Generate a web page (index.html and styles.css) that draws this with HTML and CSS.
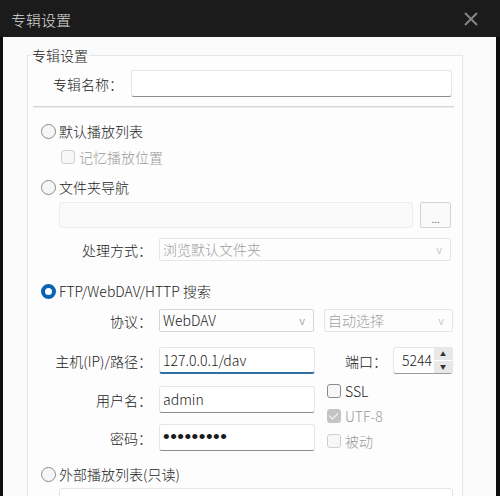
FILE: index.html
```html
<!DOCTYPE html>
<html lang="zh-CN">
  <head>
    <meta charset="UTF-8" />
    <meta name="viewport" content="width=device-width, initial-scale=1.0" />
    <title>专辑设置</title>
    <link rel="stylesheet" href="styles.css">
  </head>
  <body>
    <div class="window">
      <!-- Title bar -->
      <div class="titlebar">
        <span class="title">专辑设置</span>
        <svg class="close" width="16" height="16" viewBox="0 0 16 16">
          <path d="M2 2 L14 14 M14 2 L2 14" stroke="#858585" stroke-width="2" fill="none" />
        </svg>
      </div>

      <div class="content">
        <fieldset class="group">
          <legend>专辑设置</legend>

          <div class="row row-name">
            <label class="label label-short">专辑名称：</label>
            <div class="field field-name"></div>
          </div>
          <div class="sep"></div>

          <!-- Default playlist -->
          <div class="option opt-default"><span class="radio"></span>默认播放列表</div>
          <div class="option opt-sub disabled"><span class="check"></span>记忆播放位置</div>

          <!-- Folder navigation -->
          <div class="option opt-folder"><span class="radio"></span>文件夹导航</div>
          <div class="row row-path">
            <div class="field field-path disabled"></div>
            <div class="btn-more">...</div>
          </div>
          <div class="row row-mode">
            <label class="label">处理方式：</label>
            <div class="select select-mode disabled">浏览默认文件夹<span class="chev">v</span></div>
          </div>

          <!-- FTP / WebDAV / HTTP -->
          <div class="option opt-ftp"><span class="radio on"></span>FTP/WebDAV/HTTP 搜索</div>
          <div class="row row-proto">
            <label class="label">协议：</label>
            <div class="select select-proto">WebDAV<span class="chev">v</span></div>
            <div class="select select-auto disabled">自动选择<span class="chev">v</span></div>
          </div>
          <div class="row row-host">
            <label class="label">主机(IP)/路径：</label>
            <div class="field field-host focused">127.0.0.1/dav</div>
            <label class="port-label">端口：</label>
            <div class="spin">
              <span class="spin-value">5244</span>
              <span class="spin-btns">
                <span class="spin-btn">▲</span>
                <span class="spin-btn">▼</span>
              </span>
            </div>
          </div>

          <div class="cred">
            <div class="cred-fields">
              <div class="row row-user">
                <label class="label">用户名：</label>
                <div class="field field-host">admin</div>
              </div>
              <div class="row row-pass">
                <label class="label">密码：</label>
                <div class="field field-host dots">•••••••••</div>
              </div>
            </div>
            <div class="cred-flags">
              <div class="option"><span class="check"></span>SSL</div>
              <div class="option disabled"><span class="check checked"></span>UTF-8</div>
              <div class="option disabled"><span class="check"></span>被动</div>
            </div>
          </div>

          <!-- External playlist -->
          <div class="option opt-external"><span class="radio"></span>外部播放列表(只读)</div>
          <div class="row row-external">
            <div class="field field-external"></div>
          </div>
        </fieldset>
      </div>
    </div>
  </body>
</html>
```

FILE: styles.css
```css
html,
body {
  margin: 0;
  height: 496px;
  overflow: hidden;
}
body {
  background-color: #0e0e0e;
  font-family: "Noto Sans CJK SC", "Noto Sans", sans-serif;
  font-size: 14px;
  font-weight: 300;
  color: #1b1b1b;
}
.window {
  height: 496px;
  display: flex;
  flex-direction: column;
}
.titlebar {
  height: 37px;
  flex: none;
  display: flex;
  align-items: center;
  justify-content: space-between;
  padding: 0 21px 0 11px;
  background-color: #1b1b1b;
}
.title {
  color: #dadada;
  font-size: 15px;
  line-height: 18px;
  margin-top: 2px;
}
.close {
  margin-top: 1px;
}
.content {
  flex: 1;
  margin: 0 4px 0 3px;
  background-color: #fbfbfb;
  overflow: hidden;
}
.group {
  margin: 9px 34px 0 24px;
  padding: 0 9px 20px 13px;
  border: 1px solid #e6e6e6;
  background-color: #fdfdfd;
}
.group legend {
  padding: 0 1px;
  margin-left: -10px;
  line-height: 18px;
}
.row {
  display: flex;
  align-items: center;
}
.label {
  width: 111px;
  margin-right: 7px;
  text-align: right;
  flex: none;
}
.label-short {
  width: 82px;
  margin-right: 8px;
}
.field {
  box-sizing: border-box;
  height: 27px;
  padding: 0 3px;
  line-height: 25px;
  background-color: #fff;
  border: 1px solid #e6e6e6;
  border-bottom-color: #8e8e8e;
  border-radius: 3px;
  font-size: 14px;
  color: #1b1b1b;
}
.field.disabled {
  background-color: #fafafa;
  border-color: #ececec;
}
.field.focused {
  border-bottom: 2px solid #2f6fa3;
}
.select {
  box-sizing: border-box;
  height: 23px;
  padding: 0 3px;
  line-height: 21px;
  display: flex;
  justify-content: space-between;
  border: 1px solid #d5d5d5;
  border-radius: 2px;
  background-color: #fdfdfd;
}
.select.disabled {
  border-color: #e6e6e6;
  color: #a0a0a0;
}
.chev {
  font-size: 11px;
  color: #777;
  margin-right: 5px;
}
.disabled .chev {
  color: #aaa;
}

/* rows, top to bottom */
.row-name {
  margin-top: 6px;
}
.field-name {
  flex: 1;
  margin-right: 1px;
}
.sep {
  margin: 9px -1px 0 -8px;
  border-top: 1px solid #d6d6d6;
  border-bottom: 1px solid #eeeeee;
}
.option {
  display: flex;
  align-items: center;
  height: 22px;
  line-height: 22px;
}
.option.disabled {
  color: #9a9a9a;
}
.opt-default {
  margin-top: 12px;
}
.opt-sub {
  margin-top: 4px;
  padding-left: 20px;
}
.opt-folder {
  margin-top: 8px;
}
.row-path {
  margin-top: 4px;
  padding-left: 18px;
}
.field-path {
  width: 354px;
  height: 26px;
}
.btn-more {
  box-sizing: border-box;
  width: 31px;
  height: 26px;
  margin-left: 7px;
  border: 1px solid #d4d4d4;
  border-radius: 2px;
  background-color: #fafafa;
  color: #555;
  font-size: 11px;
  line-height: 30px;
  text-align: center;
}
.row-mode {
  margin-top: 10px;
}
.select-mode {
  width: 292px;
}
.opt-ftp {
  margin-top: 19px;
}
.row-proto {
  margin-top: 7px;
}
.select-proto {
  width: 155px;
}
.select-auto {
  width: 129px;
  margin-left: 10px;
}
.row-host {
  margin-top: 15px;
}
.field-host {
  width: 156px;
}
.port-label {
  width: 42px;
  margin-left: 30px;
}
.spin {
  box-sizing: border-box;
  width: 60px;
  height: 27px;
  margin-left: 6px;
  display: flex;
  border: 1px solid #e6e6e6;
  border-bottom-color: #9a9a9a;
  border-radius: 3px;
  background-color: #fff;
}
.spin-value {
  flex: 1;
  text-align: right;
  line-height: 25px;
  padding-right: 2px;
}
.spin-btns {
  width: 18px;
  display: flex;
  flex-direction: column;
  gap: 1px;
}
.spin-btn {
  flex: 1;
  background-color: #e8e8e8;
  color: #333;
  font-size: 6px;
  line-height: 12px;
  text-align: center;
}

/* user / password with flags on the right */
.cred {
  display: flex;
  align-items: flex-start;
}
.cred-fields {
  padding-top: 12px;
}
.row-pass {
  margin-top: 11px;
}
.dots {
  font-family: "Liberation Sans", sans-serif;
  font-size: 19px;
  font-weight: 400;
  letter-spacing: 0.5px;
  line-height: 24px;
}
.cred-flags {
  padding-top: 6px;
  margin-left: 12px;
  display: flex;
  flex-direction: column;
  gap: 3px;
}
.opt-external {
  margin-top: 11px;
}
.row-external {
  margin-top: 3px;
  padding-left: 18px;
}
.field-external {
  flex: 1;
  border-bottom-color: #e6e6e6;
}

/* radio buttons and check boxes */
.radio {
  box-sizing: border-box;
  width: 15px;
  height: 15px;
  margin-right: 3px;
  border: 1px solid #8a8a8a;
  border-radius: 50%;
  background-color: #f6f6f6;
  flex: none;
}
.radio.on {
  border: 4px solid #0a62b5;
  background-color: #fff;
}
.check {
  box-sizing: border-box;
  width: 14px;
  height: 14px;
  margin-right: 4px;
  border: 1px solid #8a8a8a;
  border-radius: 3px;
  background-color: #f7f7f7;
  flex: none;
  position: relative;
}
.disabled .check {
  border-color: #cfcfcf;
}
.check.checked {
  background-color: #c4c4c4;
  border-color: #c4c4c4;
}
.check.checked::after {
  content: "";
  position: absolute;
  left: 3px;
  top: 1px;
  width: 4px;
  height: 7px;
  border: solid #fff;
  border-width: 0 1.5px 1.5px 0;
  transform: rotate(45deg);
}
```
